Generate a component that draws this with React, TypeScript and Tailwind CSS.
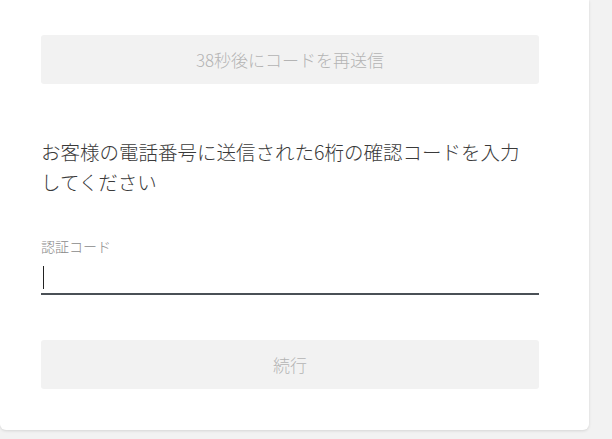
export default function App() {
  return (
    <div
      className="min-h-[439px] w-full bg-[#f2f2f2]"
      style={{ fontFamily: '"Noto Sans CJK JP", "Noto Sans", sans-serif' }}
    >
      <div className="w-[589px] rounded-b-[6px] bg-white pt-[35px] pr-[50px] pb-[41px] pl-[41px] font-light shadow-[0_1px_3px_rgba(0,0,0,0.12)]">
        <button
          type="button"
          disabled
          className="flex h-[49px] w-full items-center justify-center rounded-[3px] bg-[#f2f2f2] text-[17px] text-[#b4b4b4]"
        >
          38秒後にコードを再送信
        </button>

        <p className="mt-[53px] max-w-[490px] text-[19.5px] leading-[30px] text-[#3a3a3a]">
          お客様の電話番号に送信された6桁の確認コードを入力してください
        </p>

        <label className="mt-[39px] block text-[14px] leading-[20px] text-[#8a8a8a]">認証コード</label>
        <div className="flex h-[39px] items-start border-b-2 border-[#4a5056] pt-[10px]">
          <span className="ml-[2px] h-[23px] w-px bg-[#222]" />
        </div>

        <button
          type="button"
          disabled
          className="mt-[45px] flex h-[49px] w-full items-center justify-center rounded-[3px] bg-[#f2f2f2] text-[17px] text-[#b4b4b4]"
        >
          続行
        </button>
      </div>
    </div>
  );
}
